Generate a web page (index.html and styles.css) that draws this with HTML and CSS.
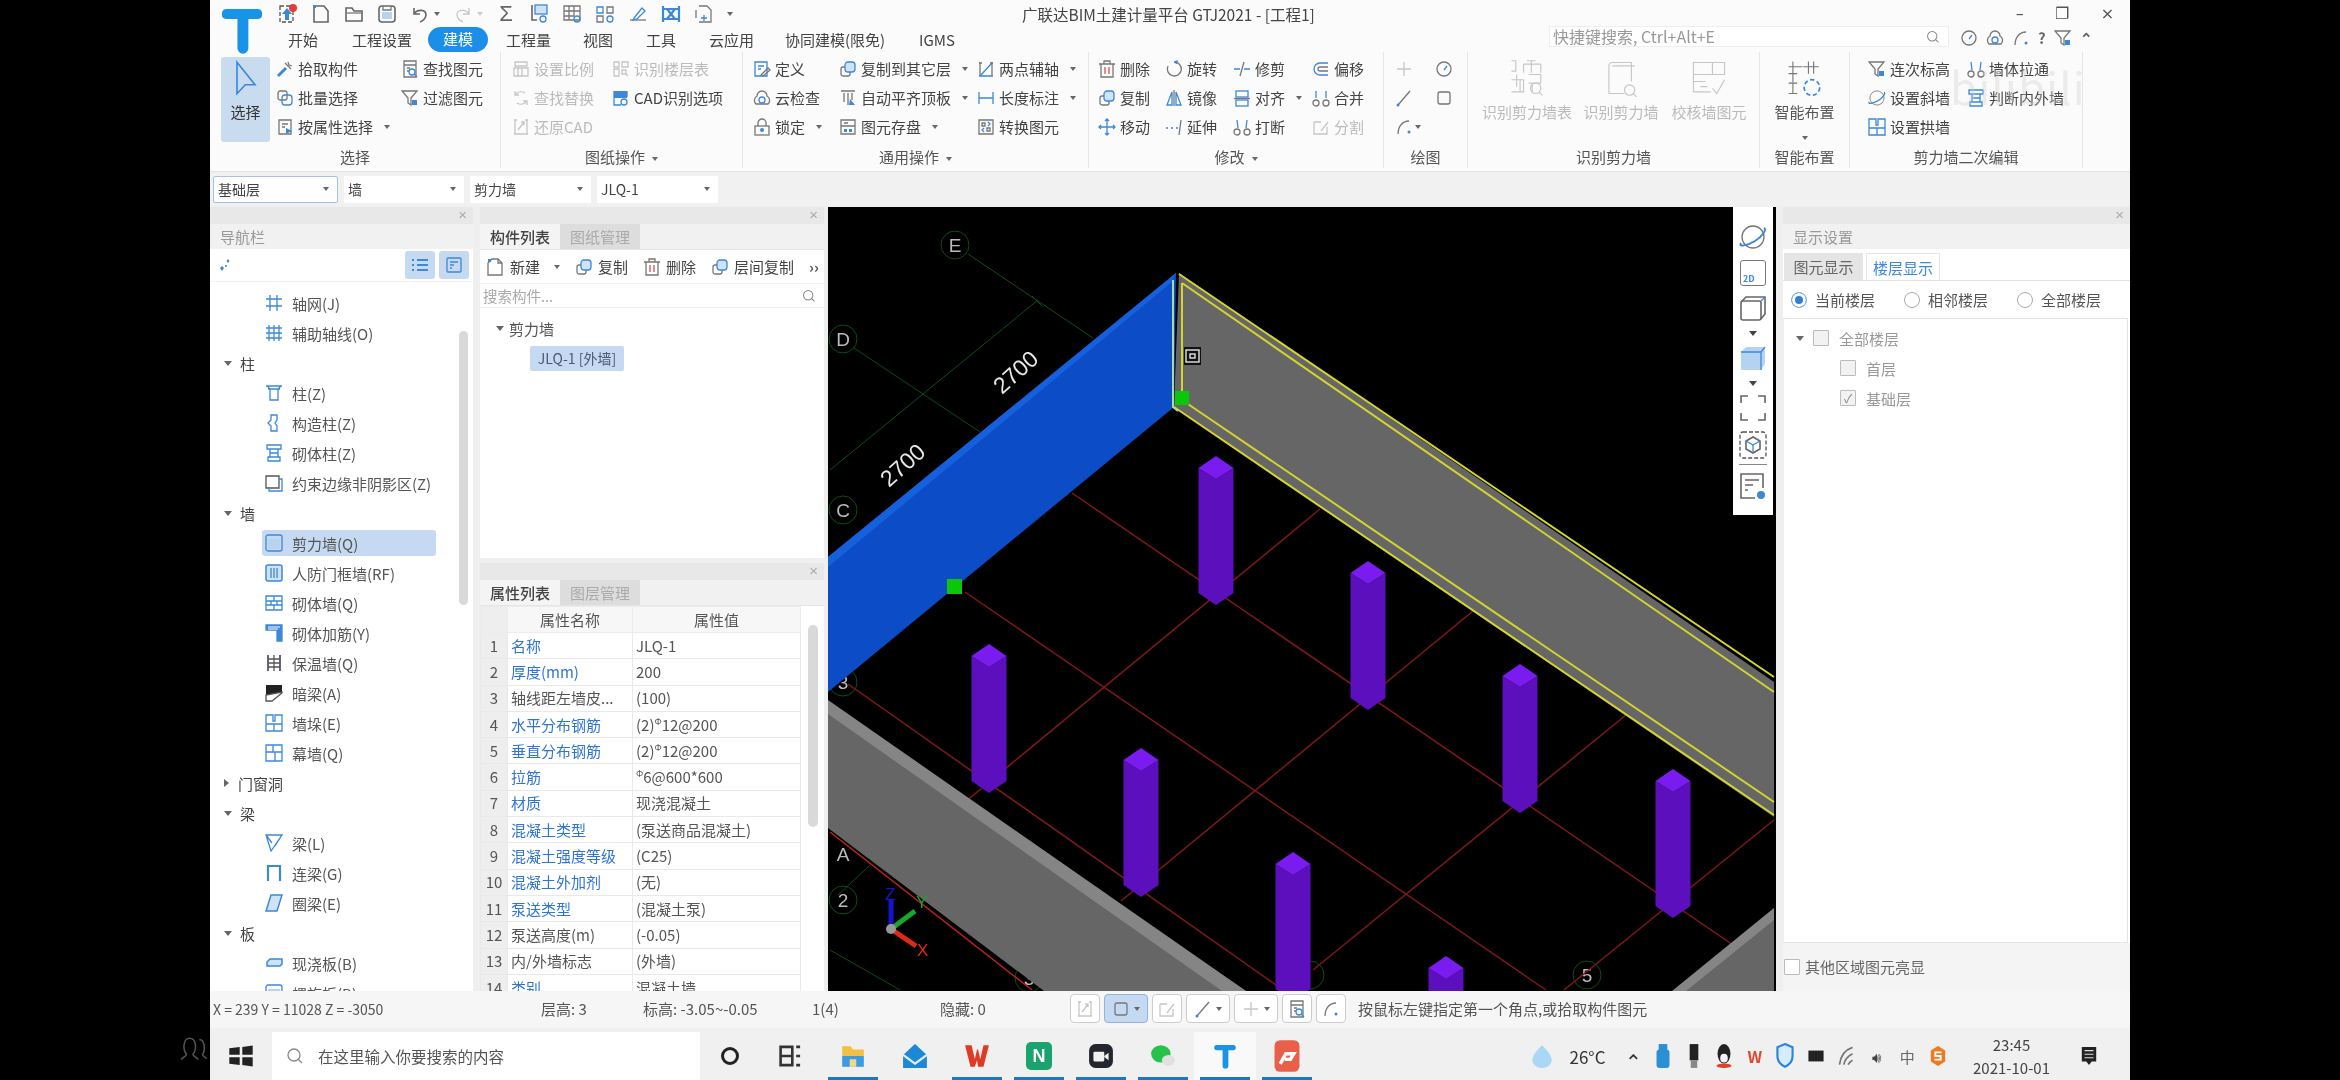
FILE: index.html
```html
<!DOCTYPE html>
<html lang="zh-CN">
<head>
<meta charset="utf-8">
<title>广联达BIM土建计量平台 GTJ2021</title>
<link rel="stylesheet" href="styles.css">
</head>
<body>
<svg class="sprite" aria-hidden="true">
<defs>
<symbol id="qup" viewBox="0 0 20 20"><path class="dash" d="M2 2h13v16H2z"/><path class="bf" d="M9 4l5 6h-3v6H7v-6H4z"/><circle class="rf" cx="15" cy="4" r="4"/></symbol>
<symbol id="qdoc" viewBox="0 0 20 20"><path class="s2" d="M3 2h10l4 5v11H3z"/><rect class="bf" x="2" y="1" width="3" height="3"/></symbol>
<symbol id="qfolder" viewBox="0 0 20 20"><path class="s2" d="M2 17V4h6l2 3h8v10z"/><path class="s" d="M2 9h16"/></symbol>
<symbol id="qsave" viewBox="0 0 20 20"><rect class="s2" x="2" y="2" width="16" height="16" rx="3"/><rect class="lf" x="5" y="8" width="10" height="7"/><path class="s" d="M6 2v4h8V2"/></symbol>
<symbol id="qundo" viewBox="0 0 20 20"><path class="s2" d="M4 4v6h6M4 10c3-5 12-5 12 1 0 3-3 6-6 7"/></symbol>
<symbol id="qredo" viewBox="0 0 20 20"><path class="d" d="M16 4v6h-6M16 10c-3-5-12-5-12 1 0 3 3 6 6 7"/></symbol>
<symbol id="qa1" viewBox="0 0 20 20"><path class="s2" d="M3 1v15h5"/><rect class="bs" x="6" y="1" width="12" height="9"/><circle class="b" cx="14" cy="15" r="3"/></symbol>
<symbol id="qa2" viewBox="0 0 20 20"><path class="s" d="M2 2h16v14H2zM2 7h16M2 12h10M7 2v14M12 2v10"/><circle class="b" cx="15" cy="15" r="3"/></symbol>
<symbol id="qa3" viewBox="0 0 20 20"><path class="b" d="M2 3h6v6H2z"/><path class="s" d="M12 3h6v6h-6zM2 12h6v6H2z"/><circle class="b" cx="15" cy="15" r="3"/></symbol>
<symbol id="qa4" viewBox="0 0 20 20"><path class="s" d="M2 16h16"/><path class="b" d="M6 14l8-10 3 3-8 8-4 1z"/></symbol>
<symbol id="qa5" viewBox="0 0 20 20"><path class="bw" d="M2 2v16M18 2v16M2 5h16M2 15h16M6 5l8 10M14 5L6 15"/></symbol>
<symbol id="qa6" viewBox="0 0 20 20"><path class="s" d="M5 2h8l4 4v12H5M2 6v8"/><path class="b" d="M7 14h6M10 11v6"/></symbol>
<symbol id="pick" viewBox="0 0 18 18"><path class="b2" d="M2 16l8-8"/><path class="s" d="M9 3l6 6M12 2l1 3 3 1"/></symbol>
<symbol id="batch" viewBox="0 0 18 18"><rect class="s" x="2" y="2" width="9" height="9" rx="2"/><rect class="b" x="6" y="6" width="10" height="10" rx="3"/></symbol>
<symbol id="attr" viewBox="0 0 18 18"><path class="s" d="M3 2h12v14H3zM6 6h6M6 9h3"/><path class="bf" d="M10 10l6 3-6 3z"/></symbol>
<symbol id="find" viewBox="0 0 18 18"><path class="s" d="M3 1h12v16H3zM3 5h12M6 8h3M6 11h2"/><circle class="b" cx="11" cy="12" r="3"/><path class="b" d="M13 14l3 3"/></symbol>
<symbol id="filter" viewBox="0 0 18 18"><path class="s" d="M1 2h15l-6 7v7l-3-2V9z"/><rect class="bf" x="11" y="11" width="5" height="5"/></symbol>
<symbol id="dscale" viewBox="0 0 18 18"><path class="d" d="M3 2h12v4H3zM2 8h14v8H2zM6 8v8M10 8v8"/></symbol>
<symbol id="dreplace" viewBox="0 0 18 18"><path class="d" d="M4 5a7 7 0 0 1 9-1M14 13a7 7 0 0 1-9 1M3 2v4h4M15 16v-4h-4"/></symbol>
<symbol id="drestore" viewBox="0 0 18 18"><path class="d" d="M2 2h3M13 2h3M2 16h14M3 2v14M15 2v14M6 12l6-8M9 4h3v3"/></symbol>
<symbol id="dfloor" viewBox="0 0 18 18"><path class="d" d="M2 2h5v5H2zM10 2h6v5h-6zM2 9h5v7H2zM10 10h4v4h-4zM14 14l2 2"/></symbol>
<symbol id="cad" viewBox="0 0 18 18"><rect class="bf" x="2" y="2" width="13" height="7"/><path class="b" d="M2 2v14h7M15 2v6"/><circle class="b" cx="12" cy="13" r="3"/></symbol>
<symbol id="define" viewBox="0 0 18 18"><path class="b" d="M2 2h12v14H2zM5 6h6M5 9h3"/><path class="s" d="M8 15l7-7 2 2-7 6z"/></symbol>
<symbol id="cloud" viewBox="0 0 18 18"><path class="s" d="M3 15a5 5 0 0 1 1-8 5 5 0 0 1 10 0 5 5 0 0 1 1 8z"/><circle class="b" cx="9" cy="11" r="3"/></symbol>
<symbol id="lock" viewBox="0 0 18 18"><path class="s" d="M5 8V5a4 4 0 0 1 8 0v3"/><rect class="s" x="2" y="8" width="14" height="9"/><circle class="bf" cx="9" cy="12" r="2"/></symbol>
<symbol id="copyto" viewBox="0 0 18 18"><rect class="s" x="2" y="7" width="9" height="9" rx="2"/><rect class="bs" x="6" y="2" width="10" height="10" rx="3"/></symbol>
<symbol id="flush" viewBox="0 0 18 18"><path class="s" d="M2 2h14M5 4v9M9 4v12M13 4v7"/><path class="bf" d="M11 10l5 6h-6z"/></symbol>
<symbol id="store" viewBox="0 0 18 18"><path class="s" d="M2 2h14v14H2zM2 8h14M5 5h4"/><rect class="bf" x="5" y="11" width="3" height="3"/><rect class="bf" x="10" y="11" width="3" height="3"/></symbol>
<symbol id="twoaxis" viewBox="0 0 18 18"><path class="s" d="M2 3h3M13 3h3M3 2v14M15 2v14"/><path class="b" d="M3 16L15 3M2 16h14"/></symbol>
<symbol id="dim" viewBox="0 0 18 18"><path class="b" d="M2 3v12M16 3v12M2 9h14"/></symbol>
<symbol id="convert" viewBox="0 0 18 18"><path class="s" d="M2 2h14v14H2zM5 5h3v3H5zM10 10h3v3h-3z"/><path class="b" d="M11 4l2 2-2 2M7 10l-2 2 2 2"/></symbol>
<symbol id="del" viewBox="0 0 18 18"><path class="s" d="M3 4h12v13H3zM1 4h16M6 4V1h6v3"/><path class="r" d="M7 7v7M11 7v7"/></symbol>
<symbol id="rotate" viewBox="0 0 18 18"><path class="s" d="M9 2a7 7 0 1 1-6 4"/><path class="b" d="M9 2l3-1-1 3"/></symbol>
<symbol id="trim" viewBox="0 0 18 18"><path class="b" d="M1 9h6M11 9h6"/><path class="s" d="M11 2L7 16"/></symbol>
<symbol id="offset" viewBox="0 0 18 18"><path class="b" d="M16 3H8a6 6 0 0 0 0 12h8"/><path class="s" d="M16 7H8a2 2 0 0 0 0 4h8"/></symbol>
<symbol id="mirror" viewBox="0 0 18 18"><path class="s" d="M9 1v16"/><path class="b" d="M7 3L2 16h5zM11 3l5 13h-5z"/></symbol>
<symbol id="alignr" viewBox="0 0 18 18"><rect class="b" x="3" y="2" width="12" height="6"/><rect class="b" x="3" y="11" width="12" height="6"/><path class="s" d="M1 9.500h16"/></symbol>
<symbol id="merge" viewBox="0 0 18 18"><circle class="s" cx="4" cy="14" r="3"/><circle class="s" cx="14" cy="14" r="3"/><path class="b" d="M4 2v7M14 2v7"/></symbol>
<symbol id="move" viewBox="0 0 18 18"><path class="b" d="M9 1v16M1 9h16M7 3l2-2 2 2M7 15l2 2 2-2M3 7L1 9l2 2M15 7l2 2-2 2"/></symbol>
<symbol id="extend" viewBox="0 0 18 18"><path class="b" d="M1 10h2M6 10h2M11 10h2"/><path class="s" d="M16 2l-2 15"/></symbol>
<symbol id="brk" viewBox="0 0 18 18"><circle class="s" cx="4" cy="14" r="3"/><circle class="s" cx="14" cy="14" r="3"/><path class="b" d="M4 2l1 8M14 2l-1 8"/></symbol>
<symbol id="dsplit" viewBox="0 0 18 18"><path class="d" d="M2 4h7M2 4v12h13V9M9 13l7-9"/></symbol>
<symbol id="dplus" viewBox="0 0 18 18"><path class="d" d="M9 2v14M2 9h14"/></symbol>
<symbol id="clock" viewBox="0 0 18 18"><circle class="s" cx="9" cy="9" r="7"/><path class="b" d="M9 10l3-4"/></symbol>
<symbol id="dline" viewBox="0 0 18 18"><path class="s" d="M3 16L15 2"/><circle class="bf" cx="3" cy="16" r="1.500"/></symbol>
<symbol id="drect" viewBox="0 0 18 18"><rect class="s" x="3" y="3" width="12" height="12" rx="2"/></symbol>
<symbol id="darc" viewBox="0 0 18 18"><path class="s" d="M3 16C3 8 8 3 14 3"/><circle class="bf" cx="14" cy="14" r="1.500"/></symbol>
<symbol id="spark" viewBox="0 0 18 18"><path class="bf" d="M12 3l1.500 2-1.500 2-1.500-2zM6 10l2 2-2 3-2-3z"/><circle class="bf" cx="10" cy="10" r="1"/></symbol>
<symbol id="big1" viewBox="0 0 44 44"><path class="d" d="M4 2h5v12H4M22 2h10M27 2v14M18 6h20M18 6v10M38 6v10M10 18v14M4 24h14v14H4M14 24v14M24 18h14v10H24M28 28v10"/><circle class="d" cx="32" cy="34" r="6"/><path class="d" d="M36 38l4 4"/></symbol>
<symbol id="big2" viewBox="0 0 44 44"><path class="d" d="M8 40V8a4 4 0 0 1 4-4h22v22M12 8h26M8 40h18"/><circle class="d" cx="32" cy="36" r="6"/><path class="d" d="M36 40l4 4"/></symbol>
<symbol id="big3" viewBox="0 0 44 44"><path class="d" d="M4 4h36v14H4zM4 18v20h20M26 4v14M4 26h14M12 32h8"/><path class="d" d="M26 34l5 6 9-16"/></symbol>
<symbol id="big4" viewBox="0 0 44 44"><path class="s" d="M8 3v24M26 3v14M3 9h16M20 9h18M32 3v14M3 17h10M3 28h10M8 28v12M3 40h10"/><circle class="bd" cx="30" cy="33" r="9"/></symbol>
<symbol id="naxis" viewBox="0 0 18 18"><path class="b" d="M1 5h16M1 12h16M5 1v16M12 1v16"/></symbol>
<symbol id="naux" viewBox="0 0 18 18"><path class="b" d="M1 4h16M1 9h16M1 14h16M4 1v16M9 1v16M14 1v16"/></symbol>
<symbol id="ncol" viewBox="0 0 18 18"><path class="b" d="M1 2h16M3 5h12M5 5v11h8V5M2 2l3 3M16 2l-3 3"/></symbol>
<symbol id="ngz" viewBox="0 0 18 18"><path class="b" d="M6 1h6v5l-2 3 2 3v5H6v-5L3 9l3-3z"/></symbol>
<symbol id="nqt" viewBox="0 0 18 18"><path class="b" d="M2 1h14v4H2zM5 5h8v8H5zM3 13h12v4H3zM5 9h8"/></symbol>
<symbol id="nys" viewBox="0 0 18 18"><path class="t" d="M1 2h13v12H1z"/><path class="b" d="M14 5h3v12H4v-3"/></symbol>
<symbol id="nwall" viewBox="0 0 18 18"><rect class="b" x="1" y="1" width="16" height="16" rx="2"/><rect class="lf" x="3" y="5" width="12" height="10"/></symbol>
<symbol id="nrf" viewBox="0 0 18 18"><rect class="lfb" x="1" y="1" width="16" height="16" rx="2"/><path class="b" d="M6 4v10M9 4v10M12 4v10"/></symbol>
<symbol id="nmas" viewBox="0 0 18 18"><path class="b" d="M1 2h16v14H1zM1 7h16M1 11h16M9 2v5M6 7v4M12 7v4M9 11v5"/></symbol>
<symbol id="nreb" viewBox="0 0 18 18"><path class="bd2" d="M1 1h16v16h-5V6H1z"/><path class="w" d="M3 3h12M3 5h10"/></symbol>
<symbol id="nins" viewBox="0 0 18 18"><path class="g2" d="M3 1v16M15 1v16"/><path class="t" d="M9 1v16M3 5h12M3 9h12M3 13h12"/></symbol>
<symbol id="nhid" viewBox="0 0 18 18"><path class="bk" d="M1 1h16v7L1 11z"/><path class="t" d="M1 11v6h6l10-8V8z"/></symbol>
<symbol id="npier" viewBox="0 0 18 18"><path class="b" d="M1 1h7v6h2V1h7v16H1zM1 10h16M9 10v7"/></symbol>
<symbol id="ncur" viewBox="0 0 18 18"><path class="b" d="M1 1h16v16H1zM1 8h16M8 1v7M10 8v9"/></symbol>
<symbol id="nbeam" viewBox="0 0 18 18"><path class="b" d="M1 1h16L6 17zM1 1l6 8M17 1l-7 11"/></symbol>
<symbol id="nlb" viewBox="0 0 18 18"><path class="bw" d="M3 17V2h12v15"/></symbol>
<symbol id="nql" viewBox="0 0 18 18"><path class="lfb" d="M6 1h11l-5 16H1z"/></symbol>
<symbol id="nslab" viewBox="0 0 18 18"><path class="lfb" d="M2 8l3-3h12v5l-2 2H2z"/></symbol>
<symbol id="nlist" viewBox="0 0 18 18"><path class="bw" d="M6 4h11M6 9h11M6 14h11M1 4h2M1 9h2M1 14h2"/></symbol>
<symbol id="ncard" viewBox="0 0 18 18"><rect class="b" x="2" y="2" width="14" height="14" rx="1"/><path class="b" d="M5 6h8M5 9h4M5 12h2"/></symbol>
<symbol id="tnew" viewBox="0 0 18 18"><path class="s" d="M6 1h6l4 4v12H2V5z"/><path class="s" d="M12 1v4h4"/><rect class="bf" x="2" y="1" width="3" height="3"/></symbol>
<symbol id="search" viewBox="0 0 18 18"><circle class="l" cx="8" cy="8" r="6"/><path class="l" d="M12 12l4 4"/></symbol>
<symbol id="orbit" viewBox="0 0 28 28"><circle class="s" cx="14" cy="14" r="11"/><path class="bring" d="M2 20C-1 24 8 23 16 18S28 6 25 5"/></symbol>
<symbol id="cube" viewBox="0 0 28 28"><rect class="s2" x="2" y="7" width="20" height="19" rx="2"/><path class="s2" d="M2 8l5-5h19v17l-4 5"/><path class="b" d="M22 7l4-4"/></symbol>
<symbol id="cubeb" viewBox="0 0 28 28"><path class="cbf" d="M2 8l5-5h19v17l-4 6H3a1 1 0 0 1-1-1z"/><path class="b" d="M2 8h20v18M22 8l4-5"/></symbol>
<symbol id="full" viewBox="0 0 28 28"><path class="s2" d="M2 9V2h7M19 2h7v7M2 19v7h7M19 26h7v-7"/></symbol>
<symbol id="dcube" viewBox="0 0 28 28"><rect class="dash" x="1" y="1" width="26" height="26" rx="3"/><path class="s2" d="M14 6l7 4v8l-7 4-7-4v-8z"/><path class="b" d="M7 10l7 4 7-4M14 14v8"/></symbol>
<symbol id="eye" viewBox="0 0 28 28"><path class="s2" d="M24 16V2H2v24h14M6 8h14M6 13h8M6 18h3"/><circle class="bf" cx="22" cy="23" r="4"/></symbol>
<symbol id="win" viewBox="0 0 20 20"><path class="bk" d="M1 4l8-1v6H1zM11 3l8-1v7h-8zM1 11h8v6l-8-1zM11 11h8v7l-8-1z"/></symbol>
</defs>
</svg>

<div class="screen">
<svg class="people" viewBox="0 0 30 24"><path class="pp" d="M3 22c2-3 5-3 5-5-4-5-3-15 3-15s7 10 3 15c0 2 3 2 5 5M20 3c5 0 6 10 3 14 0 2 2 2 4 4"/></svg>
<div class="app">

<header class="titlebar">
  <svg class="logo" viewBox="0 0 44 54"><path class="logo-t" d="M5 4h34a4 4 0 0 1 0 11H29v32a6 6 0 0 1-12 0V15H5A4 4 0 0 1 5 4z"/></svg>
  <div class="qa">
    <svg class="qi"><use href="#qup"/></svg><svg class="qi"><use href="#qdoc"/></svg><svg class="qi"><use href="#qfolder"/></svg><svg class="qi"><use href="#qsave"/></svg><svg class="qi"><use href="#qundo"/></svg><i class="caret qc"></i><svg class="qi"><use href="#qredo"/></svg><i class="caret qc light"></i><span class="qsum">Σ</span><svg class="qi"><use href="#qa1"/></svg><svg class="qi"><use href="#qa2"/></svg><svg class="qi"><use href="#qa3"/></svg><svg class="qi"><use href="#qa4"/></svg><svg class="qi"><use href="#qa5"/></svg><svg class="qi"><use href="#qa6"/></svg><i class="caret qm"></i>
  </div>
  <h1 class="apptitle">广联达BIM土建计量平台 GTJ2021 - [工程1]</h1>
  <div class="winctl"><span>–</span><span>❐</span><span>×</span></div>
</header>

<nav class="tabsrow">
  <span class="tab t1">开始</span><span class="tab t2">工程设置</span><span class="tab active">建模</span><span class="tab t3">工程量</span><span class="tab t4">视图</span><span class="tab t4">工具</span><span class="tab t5">云应用</span><span class="tab t6">协同建模(限免)</span><span class="tab t7">IGMS</span>
  <div class="qsearch"><span>快捷键搜索, Ctrl+Alt+E</span><svg class="ic-s"><use href="#search"/></svg></div>
  <div class="helpicons"><svg class="ic"><use href="#clock"/></svg><svg class="ic"><use href="#cloud"/></svg><svg class="ic"><use href="#darc"/></svg><b>?</b><svg class="ic"><use href="#filter"/></svg><b>⌃</b></div>
</nav>

<section class="ribbon">
  <div class="group g-sel">
    <div class="body">
      <div class="bigsel"><svg class="arrow" viewBox="0 0 30 48"><path class="bw" d="M3 3l24 30H14l-11 12z"/></svg><span>选择</span></div>
      <a class="it"><svg class="ic"><use href="#pick"/></svg>拾取构件</a>
      <a class="it"><svg class="ic"><use href="#find"/></svg>查找图元</a>
      <a class="it"><svg class="ic"><use href="#batch"/></svg>批量选择</a>
      <a class="it"><svg class="ic"><use href="#filter"/></svg>过滤图元</a>
      <a class="it"><svg class="ic"><use href="#attr"/></svg>按属性选择<i class="caret"></i></a>
    </div>
    <div class="glabel">选择</div>
  </div>
  <div class="group g-cad">
    <div class="body">
      <a class="it off"><svg class="ic"><use href="#dscale"/></svg>设置比例</a>
      <a class="it off"><svg class="ic"><use href="#dfloor"/></svg>识别楼层表</a>
      <a class="it off"><svg class="ic"><use href="#dreplace"/></svg>查找替换</a>
      <a class="it"><svg class="ic"><use href="#cad"/></svg>CAD识别选项</a>
      <a class="it off"><svg class="ic"><use href="#drestore"/></svg>还原CAD</a>
    </div>
    <div class="glabel">图纸操作<i class="caret"></i></div>
  </div>
  <div class="group g-gen">
    <div class="body">
      <a class="it"><svg class="ic"><use href="#define"/></svg>定义</a>
      <a class="it"><svg class="ic"><use href="#copyto"/></svg>复制到其它层<i class="caret"></i></a>
      <a class="it"><svg class="ic"><use href="#twoaxis"/></svg>两点辅轴<i class="caret"></i></a>
      <a class="it"><svg class="ic"><use href="#cloud"/></svg>云检查</a>
      <a class="it"><svg class="ic"><use href="#flush"/></svg>自动平齐顶板<i class="caret"></i></a>
      <a class="it"><svg class="ic"><use href="#dim"/></svg>长度标注<i class="caret"></i></a>
      <a class="it"><svg class="ic"><use href="#lock"/></svg>锁定<i class="caret"></i></a>
      <a class="it"><svg class="ic"><use href="#store"/></svg>图元存盘<i class="caret"></i></a>
      <a class="it"><svg class="ic"><use href="#convert"/></svg>转换图元</a>
    </div>
    <div class="glabel">通用操作<i class="caret"></i></div>
  </div>
  <div class="group g-mod">
    <div class="body">
      <a class="it"><svg class="ic"><use href="#del"/></svg>删除</a>
      <a class="it"><svg class="ic"><use href="#rotate"/></svg>旋转</a>
      <a class="it"><svg class="ic"><use href="#trim"/></svg>修剪</a>
      <a class="it"><svg class="ic"><use href="#offset"/></svg>偏移</a>
      <a class="it"><svg class="ic"><use href="#copyto"/></svg>复制</a>
      <a class="it"><svg class="ic"><use href="#mirror"/></svg>镜像</a>
      <a class="it"><svg class="ic"><use href="#alignr"/></svg>对齐<i class="caret"></i></a>
      <a class="it"><svg class="ic"><use href="#merge"/></svg>合并</a>
      <a class="it"><svg class="ic"><use href="#move"/></svg>移动</a>
      <a class="it"><svg class="ic"><use href="#extend"/></svg>延伸</a>
      <a class="it"><svg class="ic"><use href="#brk"/></svg>打断</a>
      <a class="it off"><svg class="ic"><use href="#dsplit"/></svg>分割</a>
    </div>
    <div class="glabel">修改<i class="caret"></i></div>
  </div>
  <div class="group g-draw">
    <div class="body">
      <a class="it"><svg class="ic"><use href="#dplus"/></svg></a>
      <a class="it"><svg class="ic"><use href="#clock"/></svg></a>
      <a class="it"><svg class="ic"><use href="#dline"/></svg></a>
      <a class="it"><svg class="ic"><use href="#drect"/></svg></a>
      <a class="it"><svg class="ic"><use href="#darc"/></svg><i class="caret"></i></a>
    </div>
    <div class="glabel">绘图</div>
  </div>
  <div class="group g-rec">
    <div class="body">
      <a class="bigit off"><svg class="ic-b"><use href="#big1"/></svg>识别剪力墙表</a>
      <a class="bigit off"><svg class="ic-b"><use href="#big2"/></svg>识别剪力墙</a>
      <a class="bigit off"><svg class="ic-b"><use href="#big3"/></svg>校核墙图元</a>
    </div>
    <div class="glabel">识别剪力墙</div>
  </div>
  <div class="group g-smart">
    <div class="body">
      <a class="bigit"><svg class="ic-b"><use href="#big4"/></svg>智能布置<i class="caret"></i></a>
    </div>
    <div class="glabel">智能布置</div>
  </div>
  <div class="group g-second">
    <div class="body">
      <a class="it"><svg class="ic"><use href="#filter"/></svg>连次标高</a>
      <a class="it"><svg class="ic"><use href="#brk"/></svg>墙体拉通</a>
      <a class="it"><svg class="ic"><use href="#orbit"/></svg>设置斜墙</a>
      <a class="it"><svg class="ic"><use href="#nqt"/></svg>判断内外墙</a>
      <a class="it"><svg class="ic"><use href="#npier"/></svg>设置拱墙</a>
    </div>
    <div class="glabel">剪力墙二次编辑</div>
  </div>
  <div class="watermark">bilibili</div>
</section>

<div class="selectors">
  <div class="sel cur w1">基础层<i class="caret"></i></div>
  <div class="sel w2">墙<i class="caret"></i></div>
  <div class="sel w3">剪力墙<i class="caret"></i></div>
  <div class="sel w3">JLQ-1<i class="caret"></i></div>
</div>

<main class="workspace">
  <aside class="panel nav">
    <div class="phead"><span>×</span></div>
    <div class="ptitle">导航栏</div>
    <div class="navtools"><svg class="ic"><use href="#spark"/></svg><span class="grow"></span><span class="tbtn"><svg class="ic"><use href="#nlist"/></svg></span><span class="tbtn"><svg class="ic"><use href="#ncard"/></svg></span></div>
    <ul class="navlist">
      <li class="ni"><svg class="ic"><use href="#naxis"/></svg>轴网(J)</li>
      <li class="ni"><svg class="ic"><use href="#naux"/></svg>辅助轴线(O)</li>
      <li class="ng"><i class="tri"></i>柱</li>
      <li class="ni"><svg class="ic"><use href="#ncol"/></svg>柱(Z)</li>
      <li class="ni"><svg class="ic"><use href="#ngz"/></svg>构造柱(Z)</li>
      <li class="ni"><svg class="ic"><use href="#nqt"/></svg>砌体柱(Z)</li>
      <li class="ni"><svg class="ic"><use href="#nys"/></svg>约束边缘非阴影区(Z)</li>
      <li class="ng"><i class="tri"></i>墙</li>
      <li class="ni sel-row"><svg class="ic"><use href="#nwall"/></svg>剪力墙(Q)</li>
      <li class="ni"><svg class="ic"><use href="#nrf"/></svg>人防门框墙(RF)</li>
      <li class="ni"><svg class="ic"><use href="#nmas"/></svg>砌体墙(Q)</li>
      <li class="ni"><svg class="ic"><use href="#nreb"/></svg>砌体加筋(Y)</li>
      <li class="ni"><svg class="ic"><use href="#nins"/></svg>保温墙(Q)</li>
      <li class="ni"><svg class="ic"><use href="#nhid"/></svg>暗梁(A)</li>
      <li class="ni"><svg class="ic"><use href="#npier"/></svg>墙垛(E)</li>
      <li class="ni"><svg class="ic"><use href="#ncur"/></svg>幕墙(Q)</li>
      <li class="ng"><i class="tri closed"></i>门窗洞</li>
      <li class="ng"><i class="tri"></i>梁</li>
      <li class="ni"><svg class="ic"><use href="#nbeam"/></svg>梁(L)</li>
      <li class="ni"><svg class="ic"><use href="#nlb"/></svg>连梁(G)</li>
      <li class="ni"><svg class="ic"><use href="#nql"/></svg>圈梁(E)</li>
      <li class="ng"><i class="tri"></i>板</li>
      <li class="ni"><svg class="ic"><use href="#nslab"/></svg>现浇板(B)</li>
      <li class="ni"><svg class="ic"><use href="#nwall"/></svg>螺旋板(B)</li>
    </ul>
    <div class="thumb nav-thumb"></div>
  </aside>

  <div class="midcol">
    <section class="panel comp">
      <div class="phead"><span>×</span></div>
      <div class="ptabs"><span class="ptab on">构件列表</span><span class="ptab">图纸管理</span></div>
      <div class="comptools">
        <a class="ct"><svg class="ic"><use href="#tnew"/></svg>新建<i class="caret"></i></a>
        <a class="ct"><svg class="ic"><use href="#copyto"/></svg>复制</a>
        <a class="ct"><svg class="ic"><use href="#del"/></svg>删除</a>
        <a class="ct"><svg class="ic"><use href="#copyto"/></svg>层间复制</a>
        <b class="more">››</b>
      </div>
      <div class="csearch"><span>搜索构件...</span><svg class="ic-s"><use href="#search"/></svg></div>
      <div class="ctree"><div class="ctgroup"><i class="tri"></i>剪力墙</div><div class="ctitem">JLQ-1 [外墙]</div></div>
    </section>
    <section class="panel props">
      <div class="phead"><span>×</span></div>
      <div class="ptabs"><span class="ptab on">属性列表</span><span class="ptab">图层管理</span></div>
      <table class="ptable">
        <thead><tr><th class="n"></th><th>属性名称</th><th>属性值</th></tr></thead>
        <tbody>
          <tr><td class="n">1</td><td class="k">名称</td><td>JLQ-1</td></tr>
          <tr><td class="n">2</td><td class="k">厚度(mm)</td><td>200</td></tr>
          <tr><td class="n">3</td><td>轴线距左墙皮...</td><td>(100)</td></tr>
          <tr><td class="n">4</td><td class="k">水平分布钢筋</td><td>(2)<sup class="rb">Φ</sup>12@200</td></tr>
          <tr><td class="n">5</td><td class="k">垂直分布钢筋</td><td>(2)<sup class="rb">Φ</sup>12@200</td></tr>
          <tr><td class="n">6</td><td class="k">拉筋</td><td><sup class="rb">Φ</sup>6@600*600</td></tr>
          <tr><td class="n">7</td><td class="k">材质</td><td>现浇混凝土</td></tr>
          <tr><td class="n">8</td><td class="k">混凝土类型</td><td>(泵送商品混凝土)</td></tr>
          <tr><td class="n">9</td><td class="k">混凝土强度等级</td><td>(C25)</td></tr>
          <tr><td class="n">10</td><td class="k">混凝土外加剂</td><td>(无)</td></tr>
          <tr><td class="n">11</td><td class="k">泵送类型</td><td>(混凝土泵)</td></tr>
          <tr><td class="n">12</td><td>泵送高度(m)</td><td>(-0.05)</td></tr>
          <tr><td class="n">13</td><td>内/外墙标志</td><td>(外墙)</td></tr>
          <tr><td class="n">14</td><td class="k">类别</td><td>混凝土墙</td></tr>
        </tbody>
      </table>
      <div class="thumb prop-thumb"></div>
    </section>
  </div>

  <div class="canvas">
    <svg class="scene" viewBox="828 207 948 784">
      <g class="axis">
        <path d="M968 254L1093 338M854 348L980 432M830 470L1038 300M1032 296l10 10M830 950l70 40M838 895l32-30"/>
        <circle cx="955" cy="245" r="14"/><circle cx="843" cy="339" r="14"/><circle cx="843" cy="510" r="14"/><circle cx="843" cy="682" r="14"/><circle cx="843" cy="900" r="14"/><circle cx="1029" cy="978" r="14"/><circle cx="1310" cy="975" r="14"/><circle cx="1587" cy="975" r="14"/>
      </g>
      <g class="axlabel">
        <text x="955" y="252">E</text><text x="843" y="346">D</text><text x="843" y="517">C</text><text x="843" y="689">3</text><text x="843" y="861">A</text><text x="843" y="907">2</text><text x="1029" y="985">3</text><text x="1587" y="982">5</text>
      </g>
      <text class="dimtext" transform="translate(1021 378) rotate(-42)">2700</text>
      <text class="dimtext" transform="translate(908 471) rotate(-42)">2700</text>
      <g class="grid">
        <path d="M1072 493L1736 947M965 592L1546 990M848 684L1283 990M965 802L1320 509M1121 901L1473 611M1313 970L1626 715M1564 990L1774 820"/>
      </g>
      <path class="wall" d="M1179 273L1774 682V817L1174 407z"/>
      <path class="ywire" d="M1179 274L1774 677M1182 283L1774 692M1182 400L1774 802M1174 407L1774 815M1182 283V400"/>
      <path class="bluewall" d="M1176 273L1174 407L828 692V557z"/>
      <path class="blueedge" d="M1176 273L1172 282L828 567V557z"/>
      <path class="gwire" d="M1173 280V407L1178 411"/>
      <path class="wall" d="M828 708L1246 991H1044L828 828z"/>
      <path class="walledge" d="M828 700L1246 991H1222L828 714z"/>
      <path class="redline" d="M830 832L1032 990"/>
      <path class="wall" d="M1774 914L1681 991H1774z"/>
      <path class="walledge" d="M1774 908L1672 991H1686L1774 920z"/>
      <g class="cols">
        <g transform="translate(1216 456)"><use href="#pillar"/></g>
        <g transform="translate(1368 561)"><use href="#pillar"/></g>
        <g transform="translate(1520 664)"><use href="#pillar"/></g>
        <g transform="translate(1673 769)"><use href="#pillar"/></g>
        <g transform="translate(989 644)"><use href="#pillar"/></g>
        <g transform="translate(1141 748)"><use href="#pillar"/></g>
        <g transform="translate(1293 852)"><use href="#pillar"/></g>
        <g transform="translate(1446 956)"><use href="#pillar"/></g>
      </g>
      <defs><g id="pillar"><path class="pbody" d="M-17.500 12L0 23L17.500 12V137L0 149L-17.500 137z"/><path class="ptop" d="M0 0L17.500 12L0 23L-17.500 12z"/></g></defs>
      <rect class="gp" x="1175" y="391" width="14" height="14"/>
      <rect class="gp" x="947" y="579" width="15" height="15"/>
      <g class="cursor"><rect class="cur0" x="1184" y="347" width="17" height="18"/><rect x="1186" y="350" width="13" height="12"/><rect x="1190" y="354" width="5" height="4"/></g>
      <g class="gizmo">
        <path class="gz-z" d="M891 929V900"/><path class="gz-y" d="M891 929L915 911"/><path class="gz-x" d="M891 929L916 946"/>
        <circle class="gz-o" cx="891" cy="929" r="5"/>
        <text class="lz" x="885" y="900">Z</text><text class="ly" x="916" y="908">Y</text><text class="lx" x="917" y="956">X</text>
      </g>
    </svg>
    <div class="viewbar">
      <svg class="vi"><use href="#orbit"/></svg>
      <span class="twod">2D</span>
      <svg class="vi"><use href="#cube"/></svg><i class="vcaret"></i>
      <svg class="vi"><use href="#cubeb"/></svg><i class="vcaret"></i>
      <svg class="vi"><use href="#full"/></svg>
      <svg class="vi"><use href="#dcube"/></svg>
      <hr class="vsep">
      <svg class="vi"><use href="#eye"/></svg>
    </div>
  </div>

  <aside class="panel disp">
    <div class="phead"><span>×</span></div>
    <div class="ptitle">显示设置</div>
    <div class="dtabs"><span class="dtab">图元显示</span><span class="dtab on">楼层显示</span></div>
    <div class="radios">
      <span class="rd on"><i></i>当前楼层</span><span class="rd"><i></i>相邻楼层</span><span class="rd"><i></i>全部楼层</span>
    </div>
    <div class="dtree">
      <div class="dt d0"><i class="tri"></i><i class="cb"></i>全部楼层</div>
      <div class="dt d1"><i class="cb"></i>首层</div>
      <div class="dt d1"><i class="cb chk">✓</i>基础层</div>
    </div>
    <div class="dfoot"><i class="cb"></i>其他区域图元亮显</div>
  </aside>
</main>

<footer class="status">
  <span class="st st1">X = 239 Y = 11028 Z = -3050</span><span class="st st2">层高: 3</span><span class="st st3">标高: -3.05~-0.05</span><span class="st st4">1(4)</span><span class="st st5">隐藏: 0</span>
  <div class="sbtns">
    <span class="sb b30"><svg class="ic"><use href="#drestore"/></svg></span>
    <span class="sb b45 on"><svg class="ic"><use href="#drect"/></svg><i class="caret"></i></span>
    <span class="sb b30"><svg class="ic"><use href="#dsplit"/></svg></span>
    <span class="sb b45"><svg class="ic"><use href="#dline"/></svg><i class="caret"></i></span>
    <span class="sb b45"><svg class="ic"><use href="#dplus"/></svg><i class="caret"></i></span>
    <span class="sb b30"><svg class="ic"><use href="#find"/></svg></span>
    <span class="sb b30"><svg class="ic"><use href="#darc"/></svg></span>
  </div>
  <span class="hint">按鼠标左键指定第一个角点,或拾取构件图元</span>
</footer>

<div class="taskbar">
  <span class="slot"><svg class="tk"><use href="#win"/></svg></span>
  <div class="tsearch"><svg class="ic"><use href="#search"/></svg>在这里输入你要搜索的内容</div>
  <span class="slot w60"><i class="ring"></i></span>
  <span class="slot"><svg class="tk" viewBox="0 0 20 20"><path class="tv" d="M2 3h9v14H2zM14 3h3M14 10h3M14 17h3M2 10h9"/></svg></span>
  <span class="slot run"><svg class="tk" viewBox="0 0 24 24"><path class="ap-y" d="M2 3h8l2 3h10v6H2z"/><path class="ap-b" d="M2 12h20v10H2z"/><rect class="ap-w" x="9" y="15" width="6" height="7"/></svg></span>
  <span class="slot"><svg class="tk" viewBox="0 0 24 24"><path class="ap-b2" d="M1 11L12 1l11 10v12H1z"/><path class="ap-w2" d="M1 11l11 8 11-8"/></svg></span>
  <span class="slot run"><svg class="tk" viewBox="0 0 24 24"><path class="ap-r" d="M1 2h6l3 13 2-9h1l2 9 3-13h5l-5 20h-5l-1-6-2 6H6z"/></svg></span>
  <span class="slot run"><span class="appn">N</span></span>
  <span class="slot run"><svg class="tk" viewBox="0 0 24 24"><rect class="ap-k" x="1" y="1" width="22" height="22" rx="6"/><rect class="ap-wk" x="5" y="8" width="10" height="9" rx="1"/><path class="ap-wk" d="M15 12l4-3v7l-4-3"/></svg></span>
  <span class="slot run"><svg class="tk" viewBox="0 0 24 24"><ellipse class="ap-g" cx="10" cy="10" rx="9" ry="8"/><ellipse class="ap-g2" cx="17" cy="16" rx="6" ry="5"/></svg></span>
  <span class="slot run lit"><svg class="tk" viewBox="0 0 44 54"><path class="logo-t" d="M5 4h34a4 4 0 0 1 0 11H29v32a6 6 0 0 1-12 0V15H5A4 4 0 0 1 5 4z"/></svg></span>
  <span class="slot run"><svg class="tk big" viewBox="0 0 24 30"><rect class="ap-o" x="1" y="1" width="22" height="28" rx="5"/><path class="ap-wo" d="M6 22l5-9h7l-3 5h-5"/></svg></span>
  <span class="grow"></span>
  <div class="tray">
    <span class="tr w30"><svg class="tk" viewBox="0 0 24 24"><path class="ap-sky" d="M12 2c6 6 9 10 9 14a9 7 0 0 1-18 0c0-4 3-8 9-14z"/></svg></span>
    <span class="tr temp">26°C</span>
    <span class="tr w30 chev">⌃</span>
    <span class="tr w305"><svg class="ts" viewBox="0 0 16 24"><rect class="ap-usb" x="2" y="6" width="12" height="17" rx="3"/><rect class="ap-usb" x="4" y="1" width="8" height="6"/></svg></span>
    <span class="tr w305"><svg class="ts" viewBox="0 0 16 24"><rect class="ap-blk" x="4" y="1" width="8" height="15"/><rect class="ap-gry" x="5" y="16" width="6" height="7"/></svg></span>
    <span class="tr w305"><svg class="ts" viewBox="0 0 16 24"><ellipse class="ap-blk" cx="8" cy="10" rx="6" ry="9"/><ellipse class="ap-wk" cx="8" cy="14" rx="3.500" ry="4"/><ellipse class="ap-ra" cx="8" cy="21" rx="7" ry="2"/></svg></span>
    <span class="tr w305 wps">W</span>
    <span class="tr w305"><svg class="ts" viewBox="0 0 16 24"><path class="shield" d="M8 1l7 3v8c0 5-3 8-7 10-4-2-7-5-7-10V4z"/></svg></span>
    <span class="tr w305"><svg class="ts" viewBox="0 0 16 24"><rect class="ap-blk" x="1" y="7" width="14" height="10"/></svg></span>
    <span class="tr w305"><svg class="ts" viewBox="0 0 16 24"><path class="wifi" d="M2 20C3 11 8 6 14 4M6 20c1-5 4-8 8-10M10 20c1-2 2-3 4-4"/></svg></span>
    <span class="tr w305 mu">🔊︎</span>
    <span class="tr w305 zh">中</span>
    <span class="tr w305"><svg class="ts" viewBox="0 0 20 24"><path class="ap-sg" d="M10 1l8 5v12l-8 5-8-5V6z"/><path class="sg" d="M14 8H7v4h6v4H6"/></svg></span>
    <div class="clock"><span>23:45</span><span>2021-10-01</span></div>
    <span class="tr notify"><svg class="ts" viewBox="0 0 20 24"><path class="ap-blk" d="M2 2h16v16h-5l-3 4-3-4H2z"/><path class="nlines" d="M5 6h10M5 10h10M5 14h10"/></svg></span>
  </div>
</div>

</div>
</div>
</body>
</html>
```
FILE: styles.css
```css
* { box-sizing: border-box; }
html, body { margin: 0; height: 100%; background: #000; }
body { font-family: "Noto Sans CJK SC", "Noto Sans", sans-serif; font-size: 15px; color: #444; overflow: hidden; }
.sprite { width: 0; height: 0; position: absolute; }
ul, h1 { margin: 0; padding: 0; list-style: none; font-weight: 400; }
i { font-style: normal; }
svg { flex: none; }
.grow { flex: 1; }

/* svg paint classes */
.s, .s2, .b, .bs, .b2, .bw, .d, .t, .l, .r, .g2, .dash, .bd, .bd2, .pp, .bring { fill: none; stroke-width: 1.3; }
.s { stroke: #777; }
.s2 { stroke: #666; stroke-width: 1.6; }
.b, .bs, .bd, .bd2 { stroke: #3d88d8; }
.bs { fill: #cfe3f7; }
.b2 { stroke: #3d88d8; stroke-width: 3; }
.bw { stroke: #3d88d8; stroke-width: 2.2; }
.bf { fill: #3d88d8; }
.rf { fill: #e23c3c; }
.bd { stroke-dasharray: 5 3; stroke-width: 2; }
.bd2 { fill: #3d88d8; }
.bring { stroke: #3d88d8; stroke-width: 2; }
.d { stroke: #c6c6c6; }
.t { stroke: #555; }
.l { stroke: #888; }
.r { stroke: #d05555; }
.g2 { stroke: #667; stroke-width: 2; }
.lf { fill: #b6d3f0; }
.lfb { fill: #cfe3f7; stroke: #3d88d8; stroke-width: 1.5; }
.bk { fill: #222; }
.w { stroke: #fff; fill: none; }
.cbf { fill: #b5d2f1; }
.dash { stroke: #555; stroke-dasharray: 4 2; }
.pp { stroke: #555; stroke-width: 1.4; }

.screen { height: 1080px; display: flex; justify-content: center; position: relative; }
.people { position: absolute; left: 178px; top: 1036px; width: 32px; height: 26px; }
.app { width: 1920px; height: 1080px; display: flex; flex-direction: column; background: #f2f2f2; filter: blur(0.55px); }
.ic { width: 18px; height: 18px; }
.ic-s { width: 14px; height: 14px; }
.ic-b { width: 38px; height: 38px; }

/* title bar */
.titlebar { height: 27px; background: #fbfbfb; display: flex; align-items: center; position: relative; }
.logo { position: absolute; left: 12px; top: 5px; width: 40px; height: 50px; z-index: 2; }
.logo-t { fill: #1893e6; }
.qa { margin-left: 68px; display: flex; align-items: center; gap: 13px; width: 474px; flex: none; }
.qi { width: 20px; height: 20px; }
.qa .qc { margin-left: -9px; }
.qa .qc.light { border-top-color: #ccc; }
.qsum { width: 20px; text-align: center; font: 22px/22px "Liberation Sans", sans-serif; color: #666; }
.qa .qm { margin-left: 0; }
.apptitle { font-size: 15.500px; line-height: 22px; margin-left: 270px; color: #444; white-space: nowrap; }
.winctl { margin-left: auto; display: flex; width: 130px; color: #555; font: 16px/20px "DejaVu Sans", sans-serif; justify-content: space-around; }

.tabsrow { height: 25px; background: #fbfbfb; display: flex; align-items: center; padding-left: 78px; position: relative; }
.tab { font-size: 15px; white-space: nowrap; line-height: 24px; color: #444; }
.tab.t1 { width: 64px; }
.tab.t2 { width: 76px; }
.tab.active { width: 60px; height: 25px; margin-right: 18px; text-align: center; background: #1b8fe8; color: #fff; border-radius: 13px; }
.tab.t3 { width: 77px; }
.tab.t4 { width: 63px; }
.tab.t5 { width: 76px; }
.tab.t6 { width: 134px; }
.qsearch { position: absolute; left: 1339px; top: -1px; width: 400px; height: 21px; background: #fff; border: 1px solid #eee; display: flex; align-items: center; justify-content: space-between; padding: 0 8px 0 3px; font-size: 16px; line-height: 19px; color: #999; }
.helpicons { position: absolute; left: 1750px; top: 1px; display: flex; align-items: center; gap: 8px; color: #666; font-size: 15px; line-height: 20px; }

/* ribbon */
.ribbon { height: 120px; background: #fbfbfb; display: flex; border-bottom: 1px solid #e4e4e4; position: relative; }
.group { display: flex; flex-direction: column; border-right: 1px solid #e6e6e6; margin-bottom: 3px; }
.body { height: 93px; padding-top: 2px; display: grid; grid-auto-rows: 29px; }
.glabel { text-align: center; font-size: 15px; line-height: 22px; margin-top: 2px; color: #555; }
.it { display: flex; align-items: center; gap: 4px; white-space: nowrap; font-size: 15px; color: #444; }
.it.off, .bigit.off { color: #bbb; }
.caret { display: inline-block; margin-left: 7px; border: 3px solid transparent; border-top: 4px solid #666; border-bottom: 0; vertical-align: middle; }
.g-sel { width: 291px; }
.g-sel .body { grid-template-columns: 49px 119px auto; column-gap: 6px; padding-left: 11px; }
.bigsel { grid-row: 1 / span 3; grid-column: 1; height: 85px; margin-top: 3px; background: #c9dbef; border-radius: 3px; display: flex; flex-direction: column; align-items: center; font-size: 15px; color: #333; }
.arrow { width: 24px; height: 36px; margin-top: 3px; }
.bigsel span { margin-top: 5px; line-height: 22px; }
.g-sel .body .it:nth-last-child(1) { grid-column: 2; }
.g-cad { width: 242px; }
.g-cad .body { grid-template-columns: 100px auto; padding-left: 11px; }
.g-gen { width: 346px; }
.g-gen .body { grid-template-columns: 86px 138px auto; padding-left: 10px; }
.g-mod { width: 295px; }
.g-mod .body { grid-template-columns: 67px 68px 79px auto; padding-left: 9px; }
.g-draw { width: 84px; }
.g-draw .body { grid-template-columns: 40px 40px; padding-left: 11px; }
.g-draw .caret { margin-left: -2px; }
.g-rec { width: 292px; }
.g-rec .body { grid-template-columns: 94px 94px 82px; padding-left: 12px; }
.bigit { grid-row: 1 / span 3; display: flex; flex-direction: column; align-items: center; gap: 5px; font-size: 15px; line-height: 20px; white-space: nowrap; color: #555; padding-top: 5px; }
.bigit .caret { margin: 9px 0 0; }
.g-smart { width: 90px; }
.g-smart .body { grid-template-columns: 1fr; }
.g-second { width: 233px; }
.g-second .body { grid-template-columns: 99px auto; padding-left: 18px; }
.watermark { position: absolute; left: 1740px; top: 4px; font-size: 44px; letter-spacing: 1px; color: rgba(205, 205, 205, .35); line-height: 60px; pointer-events: none; }

/* selectors */
.selectors { height: 34px; display: flex; align-items: center; gap: 6px; padding-left: 3px; background: #f1f1f1; }
.sel { height: 27px; background: #fff; display: flex; align-items: center; justify-content: space-between; padding: 0 8px 0 4px; font-size: 14px; color: #444; }
.sel .caret { margin: 0; }
.sel.cur { border: 1px solid #a6c3e4; border-radius: 2px; }
.w1 { width: 125px; }
.w2 { width: 120px; }
.w3 { width: 121px; }

/* panels */
.workspace { height: 785px; display: flex; background: #efefef; padding-top: 1px; }
.panel { background: #fff; position: relative; overflow: hidden; display: flex; flex-direction: column; }
.phead { height: 17px; background: #e8e8e8; text-align: right; padding-right: 6px; color: #aaa; font: 15px/15px "Liberation Sans", sans-serif; flex: none; }
.ptitle { height: 25px; line-height: 25px; background: #f1f1f1; color: #999; padding-left: 10px; font-size: 15px; flex: none; }
.nav { width: 263px; margin-right: 7px; }
.navtools { height: 33px; display: flex; align-items: center; padding: 0 4px 0 6px; gap: 4px; border-bottom: 1px solid #f0f0f0; flex: none; }
.tbtn { width: 30px; height: 28px; background: #c5daf1; border-radius: 3px; display: flex; align-items: center; justify-content: center; }
.navlist { padding-top: 6px; font-size: 15px; }
.navlist li { height: 30px; display: flex; align-items: center; white-space: nowrap; }
.ni { padding-left: 55px; gap: 9px; color: #555; }
.ng { padding-left: 14px; color: #444; }
.tri { display: inline-block; width: 0; height: 0; border: 4px solid transparent; border-top: 5px solid #666; border-bottom: 0; margin-right: 8px; }
.tri.closed { border: 4px solid transparent; border-left: 5px solid #666; border-right: 0; margin-right: 9px; }
.sel-row { position: relative; z-index: 0; }
.sel-row::before { content: ""; position: absolute; z-index: -1; left: 52px; width: 174px; top: 2px; height: 26px; border-radius: 3px; background: #c5daf2; }
.thumb { position: absolute; background: #d9d9d9; border-radius: 5px; }
.nav-thumb { left: 249px; top: 124px; width: 9px; height: 274px; }
.midcol { width: 344px; margin-right: 4px; display: flex; flex-direction: column; gap: 5px; }
.comp { height: 351px; flex: none; }
.props { flex: 1; }
.ptabs { height: 26px; background: #f1f1f1; display: flex; flex: none; border-bottom: 1px solid #e5e5e5; }
.ptab { width: 80px; text-align: center; line-height: 26px; background: #ddd; color: #aaa; font-size: 15px; }
.ptab.on { background: #f4f4f4; color: #444; font-weight: 500; }
.comptools { height: 33px; display: flex; align-items: center; padding-left: 6px; gap: 15px; white-space: nowrap; flex: none; }
.ct { display: flex; align-items: center; gap: 5px; font-size: 15px; }
.ct:first-child { gap: 6px; }
.ct .caret { margin-left: 8px; }
.more { color: #555; margin-left: 0; }
.csearch { height: 25px; display: flex; align-items: center; justify-content: space-between; padding: 0 8px 0 3px; border-bottom: 1px solid #efefef; border-top: 1px solid #f3f3f3; color: #aaa; font-size: 14.500px; flex: none; }
.ctree { padding: 6px 0 0 16px; }
.ctgroup { height: 28px; display: flex; align-items: center; color: #555; font-size: 15px; }
.ctgroup .tri { margin-right: 5px; }
.ctitem { margin: 4px 0 0 34px; width: 94px; height: 25px; line-height: 24px; background: #c5daf2; border-radius: 2px; text-align: center; color: #4a5a70; white-space: nowrap; font-size: 14px; }
.ptable { width: 321px; border-collapse: collapse; table-layout: fixed; font-size: 15px; line-height: 20px; }
.ptable th { height: 26px; font-weight: 400; background: #f7f7f7; color: #555; border: 1px solid #ececec; }
.ptable td { height: 26.300px; padding: 0 3px; border: 1px solid #e9e9e9; white-space: nowrap; overflow: hidden; color: #555; }
.ptable .n { width: 27px; background: #eee; text-align: center; padding: 0; color: #555; font-size: 15px; }
.ptable th:nth-child(2) { width: 125px; }
.ptable td.k { color: #2f74d8; }
.rb { font-size: 9px; line-height: 0; }
.prop-thumb { left: 328px; top: 62px; width: 10px; height: 202px; }

/* canvas */
.canvas { width: 948px; background: #000; position: relative; margin-right: 7px; overflow: hidden; }
.scene { display: block; width: 948px; height: 784px; }
.axis path, .axis circle { fill: none; stroke: #0a4f18; stroke-width: 1; }
.axlabel text { font-size: 19px; fill: #bbb; text-anchor: middle; font-family: "Liberation Sans", sans-serif; }
.dimtext { font-size: 23px; fill: #e8e8e8; text-anchor: middle; font-family: "Liberation Sans", sans-serif; }
.grid path { fill: none; stroke: #801818; stroke-width: 1.5; }
.wall { fill: #666; }
.walledge { fill: #858585; }
.redline { stroke: #c82020; stroke-width: 1.5; fill: none; }
.ywire { fill: none; stroke: #d4d42c; stroke-width: 2; }
.gwire { fill: none; stroke: #a8dc9c; stroke-width: 2; }
.bluewall { fill: #0c4cc6; }
.blueedge { fill: #1560dc; }
.pbody { fill: #5c10bd; }
.ptop { fill: #7a1cf0; }
.gp { fill: #0ac70a; }
.cursor rect { fill: none; stroke: #e4e4e4; stroke-width: 1.4; }
.cursor .cur0 { fill: #111; stroke: none; }
.gz-z, .gz-y, .gz-x { fill: none; stroke-width: 5; }
.gz-z { stroke: #1414d0; }
.gz-y { stroke: #18a828; }
.gz-x { stroke: #e02818; }
.gz-o { fill: #999; }
.gizmo text { font-size: 17px; font-family: "Liberation Sans", sans-serif; }
.lz { fill: #1414d0; }
.ly { fill: #18a828; }
.lx { fill: #e02818; }
.viewbar { position: absolute; right: 3px; top: 0; width: 40px; height: 308px; background: #fff; display: flex; flex-direction: column; align-items: center; padding-top: 16px; gap: 8.500px; }
.vi { width: 28px; height: 28px; }
.twod { width: 26px; height: 26px; border: 1.500px solid #777; border-radius: 3px; font-size: 9px; font-weight: 700; color: #3d88d8; display: flex; align-items: flex-end; padding-left: 2px; line-height: 13px; flex: none; }
.vcaret { border: 4px solid transparent; border-top: 5px solid #444; border-bottom: 0; flex: none; }
.vsep { width: 28px; margin: -3px 0 -2px; border: 0; border-top: 1px solid #888; flex: none; }

/* display panel */
.disp { width: 347px; }
.dtabs { height: 32px; display: flex; padding: 4px 0 0 1px; gap: 3px; border-bottom: 1px solid #e2e2e2; flex: none; }
.dtab { width: 79px; text-align: center; line-height: 27px; background: #e5e5e5; color: #666; font-size: 15px; }
.dtab.on { width: 74px; background: #fff; border: 1px solid #e5e5e5; border-bottom: 0; color: #3d88d8; }
.radios { height: 37px; display: flex; align-items: center; padding-left: 8px; flex: none; }
.rd { display: flex; align-items: center; gap: 8px; width: 113px; color: #555; font-size: 15px; }
.rd i { width: 16px; height: 16px; border-radius: 50%; border: 1px solid #aaa; background: #fff; }
.rd.on i { border-color: #7fb0e6; box-shadow: inset 0 0 0 3px #fff; background: #2f7fd6; }
.dtree { height: 625px; border: 1px solid #e4e4e4; border-left-color: #eee; padding-top: 4px; margin-right: 2px; flex: none; }
.dt { height: 30px; display: flex; align-items: center; color: #999; }
.dt.d0 { padding-left: 12px; }
.dt.d1 { padding-left: 56px; }
.dt .tri { margin-right: 9px; }
.cb { width: 16px; height: 16px; border: 1px solid #bbb; background: #f2f2f2; margin-right: 10px; display: block; font-size: 12px; line-height: 14px; text-align: center; color: #888; border-radius: 1px; }
.dfoot { display: flex; align-items: center; flex: 1; padding-left: 1px; color: #666; font-size: 15px; line-height: 20px; background: #f4f4f4; }
.dfoot .cb { background: #fff; margin-right: 5px; }

/* status */
.status { height: 37px; background: #f6f6f6; display: flex; align-items: center; position: relative; padding-bottom: 2px; font-size: 15px; line-height: 20px; color: #555; white-space: nowrap; }
.st { flex: none; }
.st1 { width: 331px; padding-left: 3px; font-size: 14px; }
.st2 { width: 102px; }
.st3 { width: 169px; }
.st4 { width: 128px; }
.st5 { width: 130px; }
.sbtns { display: flex; gap: 4px; }
.sb { height: 29px; background: #fff; border: 1px solid #ccc; border-radius: 4px; display: flex; align-items: center; justify-content: center; }
.sb .caret { margin-left: 4px; }
.b30 { width: 30px; }
.b45 { width: 44px; }
.sb.on { background: #c5daf2; border-color: #8eb3dc; }
.hint { margin-left: 12px; font-size: 15px; }

/* taskbar */
.taskbar { height: 52px; background: #f0f0f0; display: flex; align-items: center; flex: none; padding-top: 4px; }
.slot { width: 62px; height: 48px; display: flex; align-items: center; justify-content: center; position: relative; flex: none; }
.slot.w60 { width: 60px; }
.slot.run::after { content: ""; position: absolute; left: 6px; right: 6px; bottom: 0; height: 3px; background: #1878c4; }
.slot.lit { background: #f9f9f9; }
.tk { width: 26px; height: 26px; }
.tk.big { height: 34px; width: 28px; }
.tsearch { width: 428px; height: 48px; background: #fff; display: flex; align-items: center; gap: 14px; padding-left: 14px; font-size: 15.500px; color: #555; flex: none; }
.ring { width: 18px; height: 18px; border: 3px solid #222; border-radius: 50%; }
.tv { fill: none; stroke: #333; stroke-width: 2; }
.ap-y { fill: #f2c046; }
.ap-b { fill: #3f9be0; }
.ap-w { fill: #f2d98a; }
.ap-b2 { fill: #1e88d8; }
.ap-w2 { fill: none; stroke: #e4f2ff; stroke-width: 2; }
.ap-r { fill: #e03a24; }
.appn { width: 26px; height: 28px; border-radius: 5px; background: #1aa36f; color: #fff; font: 700 18px/28px "Liberation Sans", sans-serif; text-align: center; }
.ap-k { fill: #23262e; }
.ap-wk { fill: #f2f2f2; }
.ap-g { fill: #27c24c; }
.ap-g2 { fill: #e0e0e0; }
.ap-o { fill: #e8604a; }
.ap-wo { fill: none; stroke: #fff; stroke-width: 3; }
.tray { display: flex; align-items: center; flex: none; height: 48px; }
.tr { display: flex; align-items: center; justify-content: center; height: 48px; flex: none; }
.w30 { width: 30px; }
.w305 { width: 30.500px; }
.temp { width: 61px; font-size: 17px; color: #333; }
.chev { font-size: 20px; color: #333; padding-top: 8px; }
.ts { width: 18px; height: 26px; }
.ap-sky { fill: #a9d8f6; }
.ap-usb { fill: #2a8fd4; }
.ap-blk { fill: #222; }
.ap-gry { fill: #888; }
.ap-ra { fill: #e04028; }
.wps { color: #e2462c; font-weight: 700; font-size: 16px; }
.shield { fill: #d7ecff; stroke: #2a86e0; stroke-width: 2; }
.wifi { fill: none; stroke: #777; stroke-width: 1.6; }
.mu { font-size: 15px; color: #444; }
.zh { font-size: 15px; color: #666; }
.ap-sg { fill: #ee7a22; }
.sg { fill: none; stroke: #fff; stroke-width: 2; }
.clock { width: 117px; display: flex; flex-direction: column; align-items: center; font-size: 15px; line-height: 23px; color: #444; }
.notify { width: 38px; margin-right: 22px; }
.nlines { stroke: #ddd; stroke-width: 1.2; fill: none; }
```
